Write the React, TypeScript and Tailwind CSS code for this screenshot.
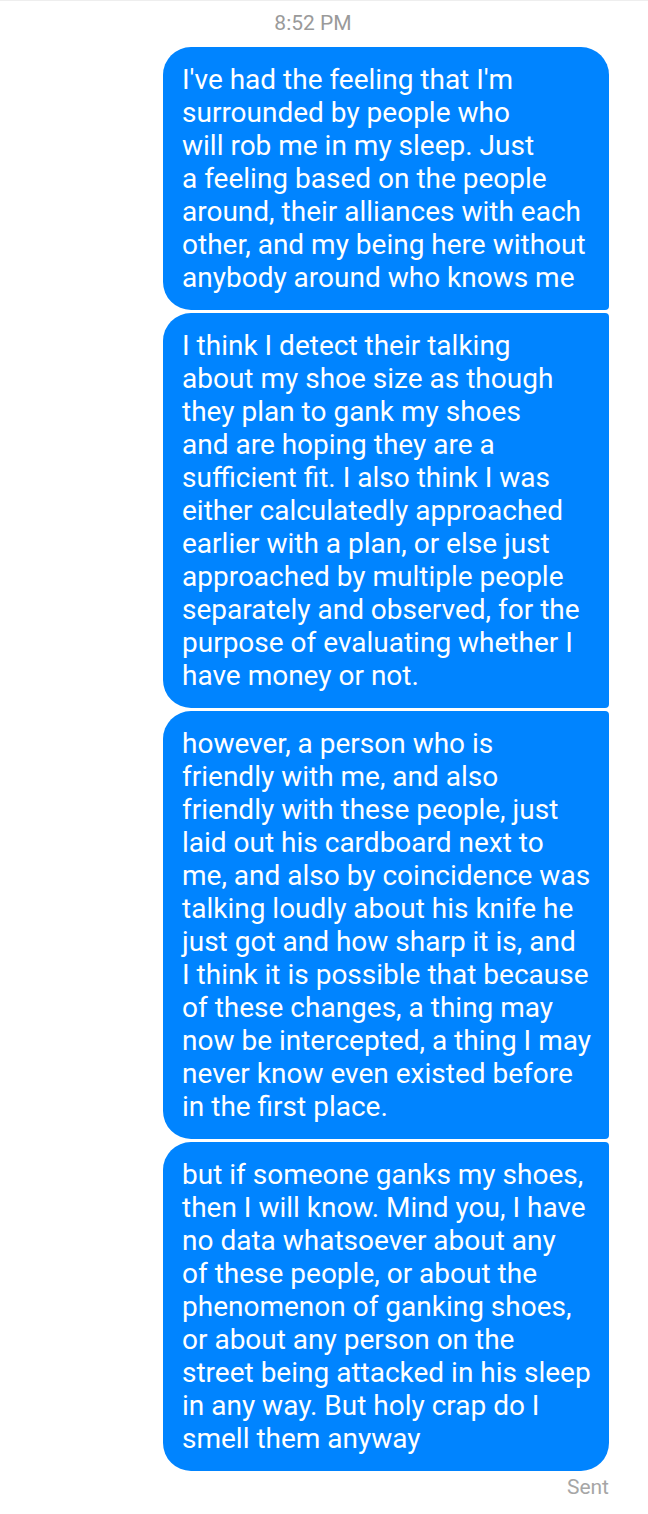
import React from "react";

const bubbles: { lines: string[]; radius: string }[] = [
  {
    lines: [
      "I've had the feeling that I'm",
      "surrounded by people who",
      "will rob me in my sleep. Just",
      "a feeling based on the people",
      "around, their alliances with each",
      "other, and my being here without",
      "anybody around who knows me",
    ],
    radius: "rounded-tl-[28px] rounded-tr-[28px] rounded-bl-[28px] rounded-br-[4px]",
  },
  {
    lines: [
      "I think I detect their talking",
      "about my shoe size as though",
      "they plan to gank my shoes",
      "and are hoping they are a",
      "sufficient fit. I also think I was",
      "either calculatedly approached",
      "earlier with a plan, or else just",
      "approached by multiple people",
      "separately and observed, for the",
      "purpose of evaluating whether I",
      "have money or not.",
    ],
    radius: "rounded-tl-[28px] rounded-tr-[4px] rounded-bl-[28px] rounded-br-[4px]",
  },
  {
    lines: [
      "however, a person who is",
      "friendly with me, and also",
      "friendly with these people, just",
      "laid out his cardboard next to",
      "me, and also by coincidence was",
      "talking loudly about his knife he",
      "just got and how sharp it is, and",
      "I think it is possible that because",
      "of these changes, a thing may",
      "now be intercepted, a thing I may",
      "never know even existed before",
      "in the first place.",
    ],
    radius: "rounded-tl-[28px] rounded-tr-[4px] rounded-bl-[28px] rounded-br-[4px]",
  },
  {
    lines: [
      "but if someone ganks my shoes,",
      "then I will know. Mind you, I have",
      "no data whatsoever about any",
      "of these people, or about the",
      "phenomenon of ganking shoes,",
      "or about any person on the",
      "street being attacked in his sleep",
      "in any way. But holy crap do I",
      "smell them anyway",
    ],
    radius: "rounded-tl-[28px] rounded-tr-[4px] rounded-bl-[28px] rounded-br-[28px]",
  },
];

export default function App() {
  return (
    <div
      className="w-[648px] h-[1514px] bg-white flex flex-col border-t border-[#eeeeee]"
      style={{ fontFamily: "Roboto, 'Noto Sans', sans-serif" }}
    >
      <div className="h-[46px] flex items-center justify-center pr-[22px] pb-[2px] text-[21px] leading-[26px] text-[#9a9a9a]">
        8:52 PM
      </div>
      <div className="ml-[163px] w-[446px] flex flex-col gap-[3px]">
        {bubbles.map((b, i) => (
          <div
            key={i}
            className={`bg-[#0084ff] text-white pl-[19px] pr-[8px] py-[16px] text-[28px] leading-[33px] ${b.radius}`}
          >
            {b.lines.map((l, j) => (
              <div key={j} className="whitespace-nowrap">
                {l}
              </div>
            ))}
          </div>
        ))}
      </div>
      <div className="ml-[163px] w-[446px] flex justify-end pt-[3px] text-[21px] leading-[26px] text-[#a6a6a6]">
        Sent
      </div>
    </div>
  );
}
